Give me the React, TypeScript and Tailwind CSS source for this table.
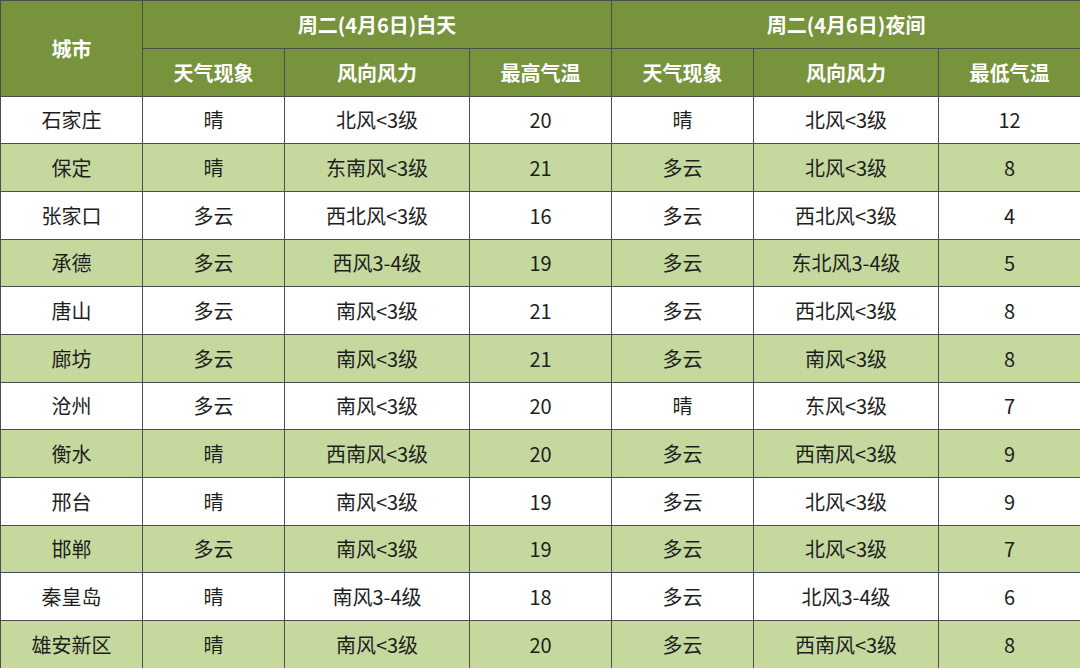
const rows = [
  ["石家庄", "晴", "北风<3级", "20", "晴", "北风<3级", "12"],
  ["保定", "晴", "东南风<3级", "21", "多云", "北风<3级", "8"],
  ["张家口", "多云", "西北风<3级", "16", "多云", "西北风<3级", "4"],
  ["承德", "多云", "西风3-4级", "19", "多云", "东北风3-4级", "5"],
  ["唐山", "多云", "南风<3级", "21", "多云", "西北风<3级", "8"],
  ["廊坊", "多云", "南风<3级", "21", "多云", "南风<3级", "8"],
  ["沧州", "多云", "南风<3级", "20", "晴", "东风<3级", "7"],
  ["衡水", "晴", "西南风<3级", "20", "多云", "西南风<3级", "9"],
  ["邢台", "晴", "南风<3级", "19", "多云", "北风<3级", "9"],
  ["邯郸", "多云", "南风<3级", "19", "多云", "北风<3级", "7"],
  ["秦皇岛", "晴", "南风3-4级", "18", "多云", "北风3-4级", "6"],
  ["雄安新区", "晴", "南风<3级", "20", "多云", "西南风<3级", "8"],
];

const heights = ["h-[47px]", "h-[48px]", "h-[48px]"];
const widths = ["w-[142px]", "w-[142px]", "w-[185px]", "w-[142px]", "w-[142px]", "w-[185px]", "w-[142px]"];

const App = () => (
  <div
    className="w-[1080px] h-[668px] bg-white overflow-hidden"
    style={{ fontFamily: '"Noto Sans CJK SC", "Noto Sans", sans-serif' }}
  >
    <table className="w-[1080px] border-collapse table-fixed text-[20px] text-[#1e1e1e]">
      <colgroup>
        {widths.map((w, i) => (
          <col key={i} className={w} />
        ))}
      </colgroup>
      <thead className="bg-[#77933c] text-white font-bold">
        <tr className="h-[48px]">
          <th rowSpan={2} className="border border-[#4d4d4d] font-bold">城市</th>
          <th colSpan={3} className="border border-[#4d4d4d] font-bold">周二(4月6日)白天</th>
          <th colSpan={3} className="border border-[#4d4d4d] font-bold">周二(4月6日)夜间</th>
        </tr>
        <tr className="h-[48px]">
          {["天气现象", "风向风力", "最高气温", "天气现象", "风向风力", "最低气温"].map((t, i) => (
            <th key={i} className="border border-[#4d4d4d] font-bold">{t}</th>
          ))}
        </tr>
      </thead>
      <tbody>
        {rows.map((r, i) => (
          <tr key={i} className={`${heights[i % 3]} ${i % 2 === 1 ? "bg-[#c5d99f]" : "bg-white"}`}>
            {r.map((c, j) => (
              <td key={j} className="border border-[#4d4d4d] text-center p-0 leading-none">{c}</td>
            ))}
          </tr>
        ))}
      </tbody>
    </table>
  </div>
);

export default App;
